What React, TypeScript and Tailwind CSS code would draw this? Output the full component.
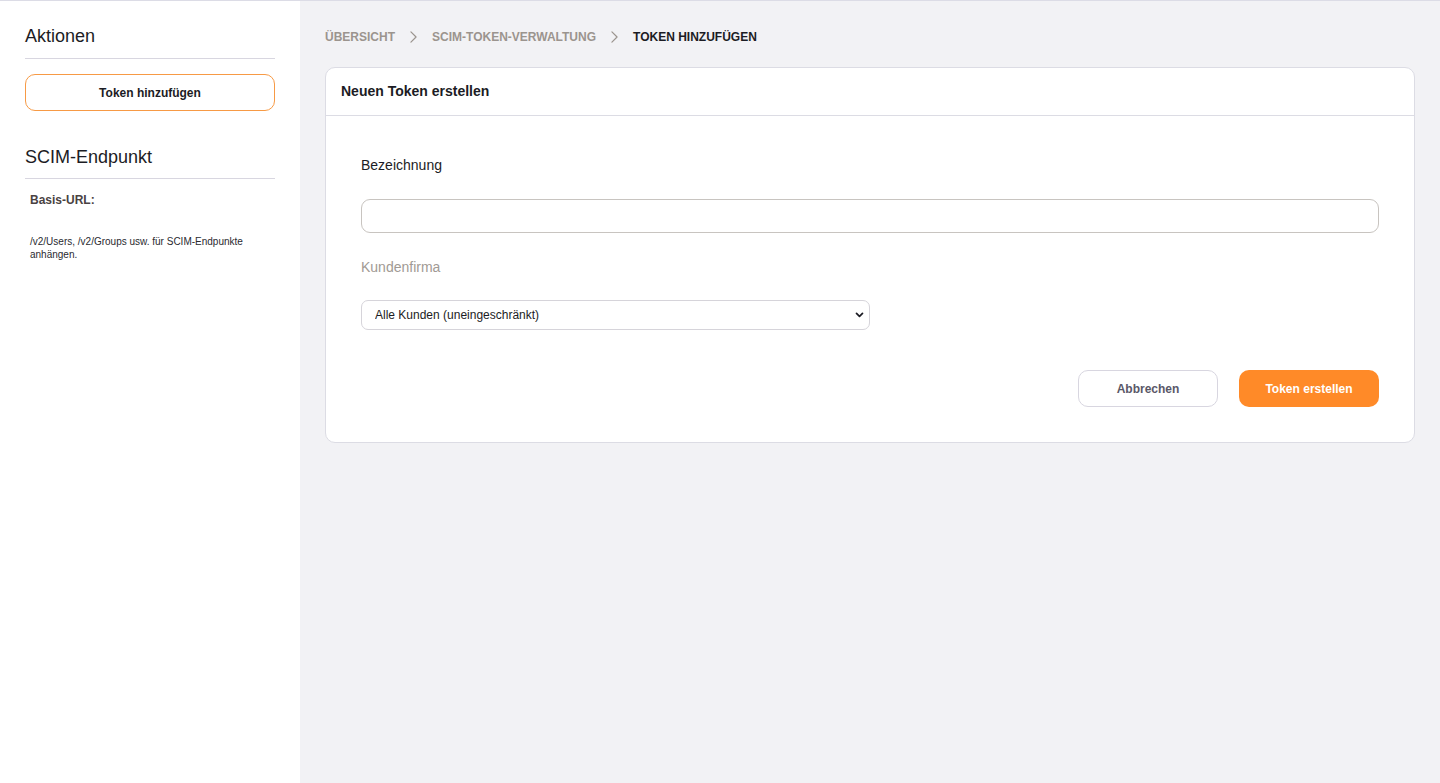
import React from "react";

function Chevron({ className = "" }: { className?: string }) {
  return (
    <svg
      viewBox="0 0 8 14"
      width="7"
      height="12"
      className={className}
      fill="none"
      stroke="currentColor"
      strokeWidth="1.4"
      strokeLinecap="round"
      strokeLinejoin="round"
    >
      <path d="M1 1l6 6-6 6" />
    </svg>
  );
}

export default function App() {
  return (
    <div
      className="flex h-[783px] border-t border-[#dcdce6] text-[#1c1c24]"
      style={{ fontFamily: '"Liberation Sans", Arial, sans-serif' }}
    >
      {/* Sidebar */}
      <aside className="w-[300px] shrink-0 bg-white px-[25px]">
        <div className="border-b border-[#d8d6e0] pt-[23px] pb-[10px]">
          <h2 className="text-[18px] leading-[24px]">Aktionen</h2>
        </div>
        <button className="mt-[15px] h-[37px] w-full rounded-[10px] border border-[#f79a45] bg-white text-[12px] font-bold text-[#1c1c24]">
          Token hinzufügen
        </button>
        <div className="mt-[34px] border-b border-[#d8d6e0] pb-[9px]">
          <h2 className="text-[18px] leading-[24px]">SCIM-Endpunkt</h2>
        </div>
        <div className="px-[5px]">
          <p className="mt-[13px] text-[12px] font-bold leading-[16px] text-[#4a4242]">
            Basis-URL:
          </p>
          <p className="mt-[27px] text-[10px] leading-[13px] text-[#2a2a30]">
            /v2/Users, /v2/Groups usw. für SCIM-Endpunkte anhängen.
          </p>
        </div>
      </aside>

      {/* Main */}
      <main className="flex-1 bg-[#f2f2f5] px-[25px]">
        <nav className="flex h-[66px] items-center gap-[15px] pt-[6px] text-[12px] font-bold uppercase">
          <span className="text-[#9b948e]">Übersicht</span>
          <Chevron className="text-[#9b948e]" />
          <span className="text-[#9b948e]">SCIM-Token-Verwaltung</span>
          <Chevron className="text-[#9b948e]" />
          <span className="text-[#1c1c24]">Token hinzufügen</span>
        </nav>

        <section className="rounded-[10px] border border-[#dcdce4] bg-white">
          <div className="flex h-[48px] items-center border-b border-[#dcdce4] px-[15px]">
            <h1 className="text-[14px] font-bold">Neuen Token erstellen</h1>
          </div>
          <div className="px-[35px] pt-[39px] pb-[35px]">
            <label className="block text-[14px] leading-[20px] text-[#1c1c24]">
              Bezeichnung
            </label>
            <input
              type="text"
              className="mt-[24px] h-[34px] w-full rounded-[9px] border border-[#c8c4c0] bg-white px-3 text-[13px] outline-none"
            />
            <label className="mt-[24px] block text-[14px] leading-[20px] text-[#a19a94]">
              Kundenfirma
            </label>
            <div className="relative mt-[23px] w-[509px]">
              <select className="h-[30px] w-full appearance-none rounded-[7px] border border-[#d6d4da] bg-white pl-[13px] text-[12px] text-[#1c1c24] outline-none">
                <option>Alle Kunden (uneingeschränkt)</option>
              </select>
              <svg
                viewBox="0 0 10 7"
                width="9"
                height="6"
                className="pointer-events-none absolute right-[6px] top-[12px] text-[#1c1c24]"
                fill="none"
                stroke="currentColor"
                strokeWidth="2"
                strokeLinecap="round"
                strokeLinejoin="round"
              >
                <path d="M1.5 1.5L5 5l3.5-3.5" />
              </svg>
            </div>
            <div className="mt-[40px] flex justify-end gap-[21px]">
              <button className="h-[37px] w-[140px] rounded-[10px] border border-[#d8d6e0] bg-white text-[12px] font-bold text-[#5a5868]">
                Abbrechen
              </button>
              <button className="h-[37px] w-[140px] rounded-[10px] bg-[#ff8a28] text-[12px] font-bold text-white">
                Token erstellen
              </button>
            </div>
          </div>
        </section>
      </main>
    </div>
  );
}
